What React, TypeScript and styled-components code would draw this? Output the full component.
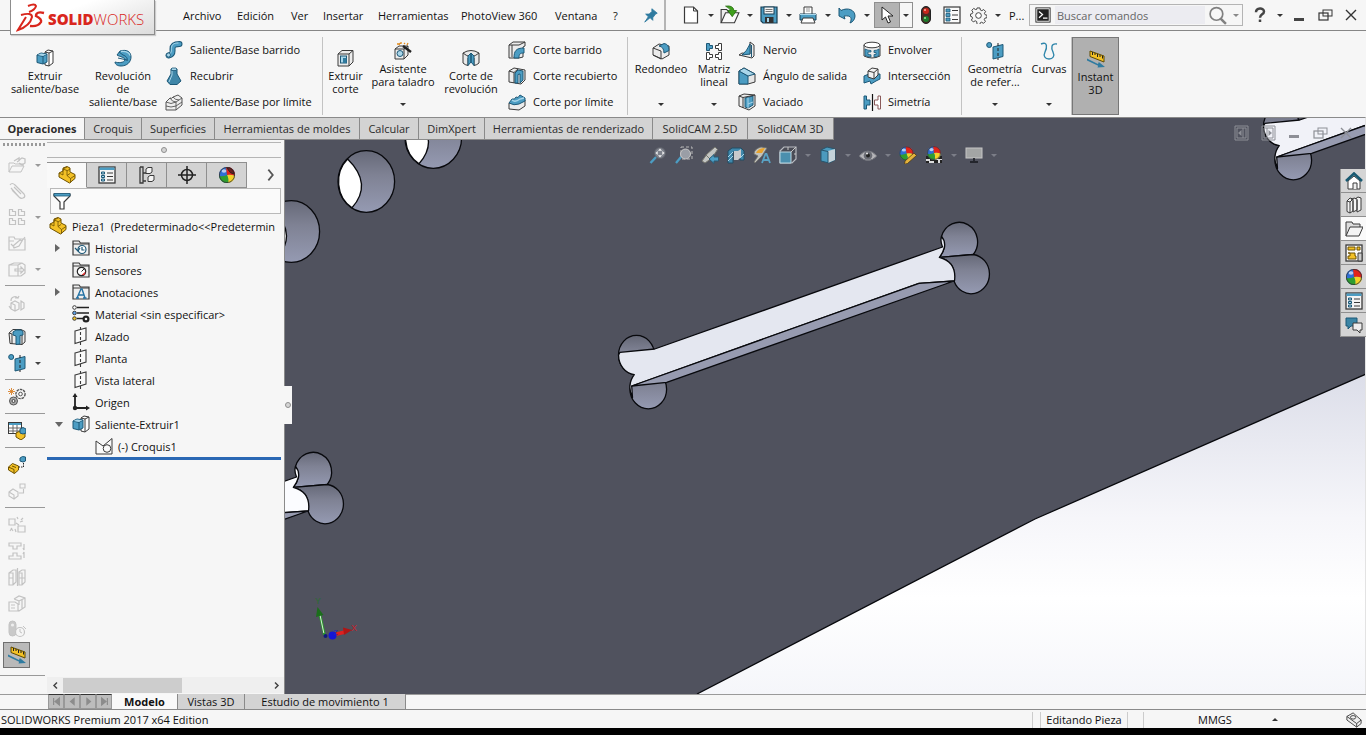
import React from "react";
import styled, { createGlobalStyle, css } from "styled-components";

const OUT = "#3a3a3a";
const BLUE = "#4c9dc3";
const LIGHT = "#a9d6ea";
const DEEP = "#1d5877";
const GOLD = "#f3c126";

const GlobalStyle = createGlobalStyle`
  * { box-sizing: border-box; }
  body {
    margin: 0;
    background: #000;
    color: #111;
    font-family: "Open Sans", "Noto Sans", sans-serif;
    font-size: 11px;
    line-height: 13px;
  }
  button, input { font: inherit; color: inherit; margin: 0; padding: 0; border: 0; background: none; }
  svg { display: block; flex: none; }
`;

/* ---------- icons ---------- */

const Ball = ({ x = 9, y = 9, r = 8 }: { x?: number; y?: number; r?: number }) => (
  <g transform={`translate(${x} ${y}) scale(${r / 8})`}>
    <circle r="8" fill="#2f6fd6" />
    <path d="M0 0L-1 -8A8 8 0 0 1 8 1Q4 -1 0 0Z" fill="#e2231a" />
    <path d="M0 0Q4 -1 8 1A8 8 0 0 1 1 8Q2 4 0 0Z" fill="#f5d327" />
    <path d="M0 0Q2 4 1 8A8 8 0 0 1 -8 1Q-4 2 0 0Z" fill="#2f9e2f" />
    <ellipse cx="-3" cy="-4" rx="2.4" ry="1.8" fill="#fff" opacity=".65" />
    <circle r="7.6" fill="none" stroke="#333" strokeWidth=".8" />
  </g>
);

const FolderShape = () => (
  <>
    <path d="M1 16V2h6l1.5 2H17v12z" fill="#eee" stroke={OUT} strokeWidth="1.2" />
    <path d="M1 5h16" stroke={OUT} />
  </>
);

const PlaneShape = () => (
  <>
    <path d="M3 4l11-3v12L3 16.5z" fill="#fafafa" stroke={OUT} strokeWidth="1.1" />
    <path d="M8.5 0v18" stroke={OUT} strokeDasharray="3 2" strokeWidth="1.1" />
  </>
);

const RefPlane = () => (
  <>
    <path d="M7 5l10-2.500v12L7 17z" fill={BLUE} stroke={DEEP} />
    <path d="M12 1v17" stroke="#222" strokeDasharray="3 2" />
    <circle cx="3.200" cy="3" r="2.500" fill={BLUE} stroke={DEEP} />
  </>
);

const PartShape = () => (
  <>
    <path d="M1 7l4-2 0-3 4-1.500 3 1.500v4l5 2.500v4L11.500 17 1 11z" fill={GOLD} stroke="#6f5200" />
    <path d="M1 7l4 2V3l4 1.500v5l3.500 3V17M5 3l4-2M9 5l3-2M9 9.500l3-2M12.500 12.500l4.500-3" fill="none" stroke="#6f5200" strokeWidth=".8" />
  </>
);

const ListShape = () => (
  <>
    <rect x="1" y="1" width="16" height="16" fill="#f4f4f4" stroke={OUT} strokeWidth="1.300" />
    <rect x="1.500" y="1.500" width="15" height="2.500" fill={BLUE} />
    <path d="M3.500 6h3v2h-3zM3.500 9.500h3v2h-3zM3.500 13h3v2h-3z" fill={LIGHT} stroke={DEEP} />
    <path d="M9 7h6M9 10.500h6M9 14h6" stroke={OUT} strokeWidth="1.200" />
  </>
);

const ExtrudeShape = () => (
  <>
    <path d="M9 3l3-2 5 1v12l-4 3-4-1z" fill="#fff" stroke={OUT} />
    <path d="M17 2l-4 2v13M13 4L9 3" fill="none" stroke={OUT} />
    <path d="M1 6l4-2 6 1v8l-4 2-6-1.500z" fill={BLUE} stroke={DEEP} />
    <path d="M1 6l6 1.500V15M7 7.500L11 5" fill="none" stroke={DEEP} />
    <path d="M1.500 6L5 4.400 10.500 5.200 7 7z" fill={LIGHT} />
  </>
);

const MeasureShape = () => (
  <>
    <path d="M3 1l14 5v6L3 6.500z" fill={GOLD} stroke="#5f4a00" />
    <path d="M5.500 2v3M8 3v2M10.500 4v3M13 5v2M15.500 6v2.500" stroke="#222" />
    <path d="M0 8.500l11 5.500.8-2L18 17l-7.500.5.6-1.800L0 10.500z" fill="#2f7ba0" />
  </>
);

const CubeHole = ({ children }: { children?: React.ReactNode }) => (
  <>
    <path d="M1 5l4-3.500h11V13l-4 4H1z" fill="#ececec" stroke={OUT} />
    <path d="M1 5h11v12M12 5l4-3.500" fill="none" stroke={OUT} />
    {children}
  </>
);

const Lens = () => (
  <>
    <path d="M8 10L1.500 17" stroke={BLUE} strokeWidth="2.400" />
    <circle cx="11" cy="7" r="5.500" fill="#7d818b" stroke="#5d6069" />
  </>
);

const ICONS: Record<string, React.ReactNode> = {
  extrude: <ExtrudeShape />,
  revolve: (
    <>
      <path d="M6 2c7-2 11 1 11 6s-4 9-10 9c-4 0-6-2-6-4 3 1 9 1 10-2 0-3-5-3-8-5z" fill={BLUE} stroke={DEEP} />
      <path d="M5 3l4 3c3 1 5 3 4 6M4 9l9 2" fill="none" stroke={DEEP} />
      <path d="M7 2.500c5-.5 8 1 9 4" fill="none" stroke={LIGHT} strokeWidth="1.300" />
    </>
  ),
  sweep: (
    <>
      <path d="M3.500 14.500c5-1 4-4 4-6.500 0-4 2-5 7-5" fill="none" stroke={DEEP} strokeWidth="6" strokeLinecap="round" />
      <path d="M3.500 14.500c5-1 4-4 4-6.500 0-4 2-5 7-5" fill="none" stroke={BLUE} strokeWidth="4" strokeLinecap="round" />
      <path d="M3.500 13.500c3-1 3-4 3-6 0-4 2-5.500 7-5.500" fill="none" stroke={LIGHT} />
      <circle cx="3.500" cy="14" r="2" fill={LIGHT} stroke={DEEP} strokeWidth=".8" />
    </>
  ),
  loft: (
    <>
      <path d="M6 2h6v5l4 7-4 3.500H5L2 14l4-7z" fill="#3f86a8" stroke={DEEP} />
      <path d="M6 2l1 1.500h4L12 2l-1-1H7z" fill={LIGHT} stroke={DEEP} strokeWidth=".8" />
      <path d="M7 4v4l-3 7" stroke={LIGHT} fill="none" />
    </>
  ),
  boundary: (
    <>
      <path d="M1 9l4-4q2 1 3-1l5-2 4 3v7l-6 5H1z" fill="#eee" stroke="#555" />
      <path d="M1 9q5 3 10 0l6-4M11 9v8M5 5q2 4 6 4M8 4q2 3 6 3M1 13q5 2 10 0l6-4" fill="none" stroke="#555" strokeWidth=".9" />
    </>
  ),
  cutExtrude: (
    <CubeHole>
      <rect x="3.500" y="7" width="6" height="7" fill={LIGHT} stroke={DEEP} />
      <path d="M6 14V9h3.500v5z" fill="#2f7ba0" />
    </CubeHole>
  ),
  holeWizard: (
    <>
      <path d="M1 7l4-3h9v9l-4 4H1z" fill="#ececec" stroke={OUT} />
      <path d="M1 7h9v10M10 7l4-3" fill="none" stroke={OUT} />
      <circle cx="6" cy="11.500" r="3" fill={LIGHT} stroke={DEEP} />
      <path d="M9 4l8 6" stroke="#222" strokeWidth="2.400" />
      <path d="M3 2h2M7 0v2M10 1l1 1M14 1l-1 2M5 3l1-2" stroke="#e08a1e" strokeWidth="1.300" />
    </>
  ),
  cutRevolve: (
    <>
      <path d="M1 4q8-5 16 0v10q-2 2-5 2.500V9L9 6 6 9v7.500Q3 16 1 14z" fill="#e9e9e9" stroke={OUT} />
      <path d="M6 16.500V7L9 4v9zM12 16.500V7L9 4v9z" fill={BLUE} stroke={DEEP} />
      <path d="M1 4q4 3 5 3M17 4q-4 3-5 3" fill="none" stroke={OUT} />
    </>
  ),
  cutSweep: (
    <>
      <path d="M1 4l4-3h12v4l-2 1v10l-4 1H1z" fill="#ececec" stroke={OUT} />
      <path d="M6 17c0-7 2-10 10-10v5c-4 0-5 1-5 5z" fill={BLUE} stroke={DEEP} />
      <path d="M1 4h10l6-3M4 4v12" fill="none" stroke={OUT} />
    </>
  ),
  cutLoft: (
    <>
      <path d="M1 4l5-3 11 2v10l-4 4-12-2z" fill="#ececec" stroke={OUT} />
      <path d="M1 4l5 1.500V16M6 5.500L10 2" fill="none" stroke={OUT} />
      <path d="M7 16V6l3-3 5 1v9l-3 3V7l-2 .5V16z" fill={BLUE} stroke={DEEP} />
    </>
  ),
  cutBoundary: (
    <>
      <path d="M1 10l16-3v6l-6 4-10-1z" fill="#ececec" stroke={OUT} />
      <path d="M1 10l3-4q3 1 4-2 2 2 4-2l5 3v3l-6 3q-5 2-10-1z" fill={BLUE} stroke={DEEP} />
      <path d="M4 7q3 3 8-1l4-1" fill="none" stroke={LIGHT} strokeWidth="1.300" />
    </>
  ),
  fillet: (
    <>
      <path d="M1 6l6-4 10 2v9l-7 4-9-4z" fill="#ececec" stroke={OUT} />
      <path d="M1 6l8 3v8M1 13l8 4" fill="none" stroke={OUT} />
      <path d="M7 4l5-2.500q5 .5 5 7l-5 2.500q0-6-5-7z" fill={BLUE} stroke={DEEP} />
    </>
  ),
  pattern: (
    <>
      <path d="M1.500 1.500h3v2h3v3h-3v2h-3z" fill={BLUE} stroke={DEEP} />
      <path d="M16.500 1.500h-3v2h-3v3h3v2h3zM1.500 10.500h3v2h3v3h-3v2h-3zM16.500 10.500h-3v2h-3v3h3v2h3z" fill="#fff" stroke={OUT} />
    </>
  ),
  rib: (
    <>
      <path d="M12 1l4 3v11l-2 2-13-3 3-2 8 1z" fill="#ececec" stroke={OUT} />
      <path d="M12 3v10l-8 1Q9 10 12 3z" fill={BLUE} stroke={DEEP} />
      <path d="M13.500 4v12" stroke={DEEP} />
    </>
  ),
  draft: (
    <>
      <path d="M1 4l5-3 11 6v8l-7 2H1z" fill="#e6e6e6" stroke={OUT} />
      <path d="M1 4l9 5v8H1z" fill={BLUE} stroke={DEEP} />
      <path d="M1 4l5-3 11 6-7 2z" fill={LIGHT} stroke={DEEP} />
    </>
  ),
  shell: (
    <>
      <path d="M1 3l5-2 11 1v11l-6 4-10-4z" fill="#ececec" stroke={OUT} />
      <path d="M7 5l8-2v9l-5 3-3-1z" fill={BLUE} stroke={DEEP} />
      <path d="M10 4.500V15M10 11l5-2" fill="none" stroke={LIGHT} />
      <path d="M1 3l4 1.500V15M5 4.500L17 2" fill="none" stroke={OUT} />
    </>
  ),
  wrap: (
    <>
      <path d="M1 4v11q8 4 16 0V4" fill="#ececec" stroke={OUT} />
      <ellipse cx="9" cy="4" rx="8" ry="2.800" fill="#fff" stroke={OUT} />
      <path d="M2 8q3 1.500 6 1.500V11H5v2.500l3 .3V16q-3 0-6-1.500zM16 8q-2 1.500-5 1.500v2h2v2h-2V16q3 0 5-1.500z" fill={BLUE} stroke={DEEP} strokeWidth=".8" />
    </>
  ),
  intersect: (
    <>
      <path d="M1 9l5-2h11v5l-4 2-5 3-1-3-6 2z" fill={BLUE} stroke={DEEP} />
      <path d="M5 4l4-3 6 1v6l-4 4-6-2z" fill="#f2f2f2" stroke={OUT} />
      <path d="M5 4l6 1.500V12M11 5.500L15 2" fill="none" stroke={OUT} />
    </>
  ),
  mirror: (
    <>
      <path d="M1 3h2.500v4H7v5H3.500v4H1z" fill={BLUE} stroke={DEEP} />
      <path d="M17.500 3H15v4h-3.500v5H15v4h2.500z" fill="#fff" stroke="#8a5a5a" />
      <path d="M9.500 1v17" stroke="#111" strokeWidth="1.200" />
    </>
  ),
  refGeometry: <RefPlane />,
  curves: (
    <path d="M1 2c7-3 6 4 4 8s0 7 4 7 6-3 4-7-2-9 4-8" fill="none" stroke="#2f86ab" strokeWidth="1.400" />
  ),
  measure: <MeasureShape />,
  pin: <path d="M10 2l6 5-2 1-3 4v3l-3-3-6 5 4-6-3-3h4l3-3z" fill="#2f7ba0" stroke="#2f7ba0" />,
  newDoc: (
    <>
      <path d="M2.500 1h9l4 4v12h-13z" fill="#fff" stroke={OUT} strokeWidth="1.200" />
      <path d="M11.500 1v4h4" stroke={OUT} />
    </>
  ),
  open: (
    <>
      <path d="M1 16V4h5l1.500 2H13v3" fill="#ededed" stroke={OUT} />
      <path d="M1 16l4-9h12l-4 9z" fill="#fafafa" stroke={OUT} />
      <path d="M5 1q7-1 7.500 4H15l-4 5.500L7 5h2.500Q9 3 5 1z" fill="#3fa01c" stroke="#226b0a" strokeWidth=".7" />
    </>
  ),
  save: (
    <>
      <path d="M1 1h16v16H3l-2-2z" fill={BLUE} stroke="#163e54" strokeWidth="1.200" />
      <rect x="4" y="1" width="10" height="7" fill="#f5f5f5" stroke="#163e54" />
      <path d="M5.500 3.500h7M5.500 5.500h7" stroke="#777" />
      <rect x="5" y="11" width="8.500" height="6" fill="#333" />
      <rect x="7" y="12" width="2" height="4" fill={LIGHT} />
    </>
  ),
  print: (
    <>
      <path d="M5 8V1h8v7" fill="#fff" stroke={OUT} />
      <path d="M7 3h4M7 5h4" stroke="#999" />
      <path d="M1 8h16v6H1z" fill={BLUE} stroke="#163e54" />
      <path d="M4 12h10l2 5H2z" fill="#fff" stroke={OUT} />
      <path d="M1 8.500h16" stroke={LIGHT} />
    </>
  ),
  undo: (
    <path d="M1 2l2 2.500C10 1 17 4 17 10c0 3-2 6-5 7 2-4 2-8-6-7l1 3-6-3z" fill={BLUE} stroke={DEEP} />
  ),
  cursor: <path d="M4 1v13l3.500-3 2.500 6 2.500-1-2.500-6H15z" fill="#fff" stroke="#222" />,
  traffic: (
    <>
      <rect x="4.500" y="0.500" width="9" height="17" rx="4.500" fill="#4a2b25" stroke="#222" />
      <circle cx="9" cy="5" r="3" fill="#c8261c" />
      <circle cx="9" cy="13" r="3" fill="#1c7a2a" />
      <circle cx="8" cy="4" r="1" fill="#ffb0a0" />
      <circle cx="8" cy="12" r="1" fill="#a0e8a0" />
    </>
  ),
  options: (
    <>
      <rect x="1" y="1" width="16" height="16" fill="#fafafa" stroke={OUT} strokeWidth="1.200" />
      <path d="M3 3h4v3H3zM3 7.500h4v3H3zM3 12h4v3H3z" fill={BLUE} stroke={DEEP} strokeWidth=".8" />
      <path d="M9 4.500h6M9 9h6M9 13.500h6" stroke={OUT} strokeWidth="1.200" />
    </>
  ),
  gear: (
    <>
      <path
        d="M7.500 1h3l.5 2.200 1.500.7 2-1.200 2 2-1.200 2 .7 1.500 2.000.5v2.600l-2.200.5-.7 1.500 1.200 2-2 2-2-1.200-1.500.7-.5 2.200h-2.600L7 15.300l-1.500-.7-2 1.200-2-2 1.200-2-.7-1.500L.5 9.800V7.500L2.400 7l.7-1.500-1.200-2 2-2 2 1.200L7 2.600z"
        fill="#f6f6f6"
        stroke={OUT}
      />
      <circle cx="9" cy="9" r="3" fill="#fff" stroke={OUT} />
    </>
  ),
  terminal: (
    <>
      <rect x="1" y="1" width="16" height="16" fill="#fff" stroke="#222" />
      <rect x="2.500" y="2.500" width="13" height="13" fill="#222" />
      <path d="M4.500 5l4 3.500-4 3.500M9 12.500h5" fill="none" stroke="#fff" strokeWidth="1.400" />
    </>
  ),
  search: (
    <>
      <circle cx="8" cy="7.500" r="6" fill="none" stroke="#808080" strokeWidth="1.600" />
      <path d="M12 12l5 5" stroke="#808080" strokeWidth="2.400" />
    </>
  ),
  help: (
    <path d="M4.500 6c0-5.500 9-5.500 9-1 0 3.500-4.500 3-4.500 7M9 14v3" fill="none" stroke="#444" strokeWidth="2.800" />
  ),
  minimize: <path d="M4 13.500h10" stroke="#444" strokeWidth="3" />,
  restore: (
    <>
      <rect x="7" y="4" width="9" height="6" fill="none" stroke="currentColor" />
      <rect x="3" y="7" width="9" height="7" fill="none" stroke="currentColor" strokeWidth="1.200" />
    </>
  ),
  close: <path d="M4 4l10 10M14 4L4 14" stroke="currentColor" strokeWidth="1.400" />,
  panelLeft: (
    <>
      <path d="M2 2h13v14H2zM4 4h9v10H4zM10 4v10" fill="none" stroke="currentColor" />
      <path d="M8.500 6v6L5 9z" fill="currentColor" />
    </>
  ),
  panelRight: (
    <>
      <path d="M3 2h13v14H3zM5 4h9v10H5zM8 4v10" fill="none" stroke="currentColor" />
      <path d="M9.500 6v6L13 9z" fill="currentColor" />
    </>
  ),
  flatMin: <path d="M4 12.500h10" stroke="currentColor" strokeWidth="3" />,
  part: <PartShape />,
  list: <ListShape />,
  config: (
    <>
      <path d="M2 1v16h3v-2h3M2 1h3v6h4M5 7v8" fill="none" stroke={OUT} strokeWidth="1.300" />
      <path d="M8 3l2-1.500h4V6l-2 1.500H8zM10 11l2-1.500h4V14l-2 1.500h-4z" fill="#f4f4f4" stroke={OUT} />
    </>
  ),
  target: (
    <>
      <circle cx="9" cy="9" r="5.500" fill="none" stroke="#222" strokeWidth="1.500" />
      <path d="M9 0v18M0 9h18" stroke="#222" strokeWidth="1.500" />
    </>
  ),
  ball: <Ball />,
  ballDark: (
    <>
      <Ball />
      <path d="M9 2q6-1 7 6-4 0-7-6z" fill="#6b1f1f" stroke="#222" strokeWidth=".8" />
    </>
  ),
  funnel: (
    <>
      <path d="M1 2h16v2l-6 6v7H7v-7L1 4z" fill="#fff" stroke={OUT} strokeWidth="1.200" />
      <path d="M1 1.500h16v2.500H1z" fill={BLUE} stroke={DEEP} strokeWidth=".8" />
    </>
  ),
  history: (
    <>
      <FolderShape />
      <circle cx="10" cy="10.500" r="4" fill="#fff" stroke={DEEP} strokeWidth="1.200" />
      <path d="M10 8v3h2.500M3 9l3 3 2-3" fill="none" stroke={DEEP} strokeWidth="1.200" />
    </>
  ),
  sensors: (
    <>
      <FolderShape />
      <circle cx="9.500" cy="10.500" r="4.200" fill="#fff" stroke="#222" strokeWidth="1.200" />
      <path d="M9.500 10.500L12 8" stroke="#222" />
      <path d="M9.500 14l4-3.500-1 3.500z" fill="#d33" />
    </>
  ),
  annotations: (
    <>
      <FolderShape />
      <path d="M5 15l4-9h1l3 9M6.500 12h5M4 15h3M11 15h3.500" fill="none" stroke="#2472a4" strokeWidth="1.400" />
    </>
  ),
  material: (
    <>
      <path d="M5 2.500h12M5 8h12M5 13.500h6" stroke="#222" strokeWidth="1.600" />
      <circle cx="2.500" cy="2.500" r="1.800" fill="#fff" stroke={OUT} />
      <circle cx="2.500" cy="8" r="1.800" fill="#5da2ea" stroke={OUT} />
      <circle cx="2.500" cy="13.500" r="1.800" fill={GOLD} stroke={OUT} />
      <circle cx="14" cy="14" r="2.400" fill="none" stroke="#222" strokeWidth="2.200" />
    </>
  ),
  plane: <PlaneShape />,
  origin: (
    <>
      <path d="M3 3v12h11" fill="none" stroke="#222" strokeWidth="1.800" />
      <path d="M3 0l2.500 4h-5zM18 15l-4 2.500v-5z" fill="#222" />
      <circle cx="3" cy="15" r="2.200" fill="#222" />
    </>
  ),
  sketch: (
    <>
      <path d="M1 17V4l7 5 9-7.500V17z" fill="#fafafa" stroke={OUT} />
      <circle cx="12" cy="11.500" r="3.800" fill="#fafafa" stroke={OUT} />
    </>
  ),
  holeSeries: (
    <>
      <path d="M1 5l4-3.500h8l4 2V14l-3 2.500-12-1z" fill="#ececec" stroke={OUT} />
      <path d="M1 5l3 1v10M14 6v10.500" stroke={OUT} />
      <path d="M5 4l3-2h5l2 1.500V7l-3 .5V16l-4 .5V8L5 7z" fill={BLUE} stroke={DEEP} />
    </>
  ),
  assemblyOpen: (
    <>
      <path d="M1 16V7h5l1 1h8v2M1 16l3-6h12l-3 6z" fill="none" stroke="currentColor" />
      <path d="M6 5l5-3v2l3-2 3 1v4l-3 2-3-2M9 6l3-2" fill="none" stroke="currentColor" strokeWidth="1.300" />
    </>
  ),
  clip: <path d="M2 3q2-3 5 0l9 9q2 3-1 4-2 1-4-1L3 6M6 5l7 7M4 8l7 7" fill="none" stroke="currentColor" strokeWidth="1.200" />,
  patternGrey: (
    <path d="M1.500 1.500h3v2h3v4h-6zM10.500 1.500h3v2h3v4h-6zM1.500 10.500h3v2h3v4h-6zM10.500 10.500h3v2h3v4h-6z" fill="none" stroke="currentColor" strokeWidth="1.200" />
  ),
  folderEdit: (
    <path d="M1 16V3h5l1 2h10v11zM1 7h5M5 12l7-6 2 1-3 5-5 2zM3 10l4 4M17 3l-4 5" fill="none" stroke="currentColor" strokeWidth="1.200" />
  ),
  moveBox: (
    <path d="M1 5l5-2h8l3 2v8l-4 3H1zM1 5h9v11M10 5l4-2M7 9h6V7l3 3-3 3v-2H7z" fill="none" stroke="currentColor" strokeWidth="1.200" />
  ),
  rotate: (
    <path d="M3 7a4 4 0 0 1 7-3l1-2M10 4H7M3 9l4-2 4 2v6l-4 2-4-2zM3 9l4 2v6M13 7l3 2v5l-3 2zM1 12l2 3" fill="none" stroke="currentColor" strokeWidth="1.200" />
  ),
  gears: (
    <>
      <circle cx="12.500" cy="6" r="4.600" fill="#f3f3f3" stroke="#555" strokeWidth="1.400" strokeDasharray="2.600 .8" />
      <circle cx="12.500" cy="6" r="1.800" fill="#fff" stroke="#555" />
      <circle cx="5.500" cy="13" r="4" fill="#aaa" stroke="#555" />
      <circle cx="5.500" cy="13" r="1.500" fill="#eee" stroke="#444" />
      <path d="M3.500 0v7M0 3.500h7M1 1l5 5M6 1L1 6" stroke="#d9822b" strokeWidth=".9" />
    </>
  ),
  tablePart: (
    <>
      <rect x="0.500" y="0.500" width="13" height="11" fill="#fff" stroke={OUT} />
      <rect x="1" y="1" width="12" height="2" fill={BLUE} />
      <path d="M1 6h12M1 9h12M5 3v8M9 3v8" stroke="#666" />
      <path d="M8 11l4-2 5 2v4l-4 3-5-3z" fill={GOLD} stroke="#6f5200" />
      <path d="M12 7l3-1.500 3 1.500v4l-3 1-3-1z" fill={BLUE} stroke={DEEP} />
    </>
  ),
  explode: (
    <>
      <path d="M0.500 11l4-3.500 6 2.500v4l-4 3.500-6-3.500z" fill={GOLD} stroke="#6f5200" />
      <path d="M0.500 11l5.500 2.500v4M4 10l4 1.500" fill="none" stroke="#6f5200" />
      <path d="M12 2l2.500-1.500L17.500 1v4L15 6l-3-1z" fill={BLUE} stroke={DEEP} />
      <path d="M15.500 7v4H11" fill="none" stroke="#222" strokeDasharray="1.500 1" />
    </>
  ),
  explodeGrey: (
    <path d="M1 10l4-3 5 3v4l-4 3-5-3zM1 10l5 3v4M12 2h5v4h-5zM15.500 7v4H11" fill="none" stroke="currentColor" strokeWidth="1.100" />
  ),
  fixBoxes: (
    <path d="M1 3h6v6H1zM10 10h7v6h-7zM8 7l3 2M9 1l1 2M13 4l2-2M12 6l3-1M3 12l2 3M2 15l2-3M7 13l1 3" fill="none" stroke="currentColor" strokeWidth="1.200" />
  ),
  clamp: (
    <path d="M1 1h12v3H9v3H5V4H1zM1 17h12v-3H9v-3H5v3H1zM16 2v6l-1-2M16 16v-6l-1 2" fill="none" stroke="currentColor" strokeWidth="1.200" />
  ),
  halves: (
    <path d="M1 5l4-3h3v12l-3 3H1zM1 5h4v12M11 4l3-2h3v12l-3 3h-3zM11 5h3v12M9.500 0v18M1 10h4M11 10h6" fill="none" stroke="currentColor" strokeWidth="1.200" />
  ),
  boxSheet: (
    <path d="M6 5l5-3 6 2v9l-6 4-1-1M6 5l5 2v4M11 7l6-3M1 8h6l3 2v7H1zM3 11h4M3 14h4M14 6v9" fill="none" stroke="currentColor" strokeWidth="1.200" />
  ),
  lightClock: (
    <>
      <rect x="1" y="1" width="7" height="15" rx="3.500" fill="#c9c9c9" stroke="currentColor" />
      <circle cx="4.500" cy="5" r="1.600" fill="#eee" />
      <circle cx="12" cy="12" r="4.500" fill="#f6f6f6" stroke="currentColor" strokeWidth="1.200" />
      <path d="M12 9v3l2 1M15 6l3 3" fill="none" stroke="currentColor" />
    </>
  ),
  zoomFit: (
    <>
      <Lens />
      <path d="M11 2.500l2 2.200H9zM11 11.500l2-2.200H9zM6.500 7l2.200-2v4zM15.500 7l-2.200-2v4z" fill="#f0f0f0" />
    </>
  ),
  zoomArea: (
    <>
      <path d="M6 1h11v12H6z" fill="none" stroke="#b8b8b8" strokeDasharray="3 2" />
      <path d="M6 11L1 17" stroke={BLUE} strokeWidth="2.200" />
      <circle cx="10.500" cy="8" r="5" fill="#9a9ea6" stroke="#c8c8c8" />
    </>
  ),
  prevView: (
    <>
      <path d="M14 1l2.500 2.500L11 12l-7 5-3-2 5-7z" fill="#c3c5c3" stroke="#77776f" />
      <path d="M5 9l4 4" stroke="#77776f" />
      <path d="M17.500 11H13V8.500L8 13l5 4.500V15h4.500z" fill={BLUE} stroke="#2a5a74" />
    </>
  ),
  section: (
    <>
      <path d="M1 5l4-3h9l3 3v9h-4V6H6v11H1z" fill="#3f88ac" stroke="#234c62" />
      <path d="M7 5h4l3-2v8l-3 3H7z" fill="#c7c9cc" />
      <path d="M1 11l5-5M1 15l5-5M13 12l4-4" stroke={LIGHT} />
    </>
  ),
  annotView: (
    <>
      <path d="M1 8q0-5 7-7l6 1-5 8-7 7-1-1 4-6z" fill="#c2c2bc" stroke="#6d6d68" strokeWidth=".8" />
      <path d="M3 7q2-5 9-5l-3 5z" fill="#e8a32e" />
      <path d="M9 17l3.500-9h1L17 17M10.500 14h5" fill="none" stroke="#5aa2c4" strokeWidth="1.800" />
    </>
  ),
  viewCube: (
    <>
      <path d="M1 5l4-4h12v12l-4 4H1z" fill="#4a4c56" stroke="#b9bcc2" strokeWidth="1.200" />
      <path d="M1 6h11v11H1z" fill="#4b8fae" stroke="#b9d5e0" />
      <path d="M12 6l5-5M9 4V1M15 8h2" stroke="#c8c8c8" />
    </>
  ),
  shaded: (
    <>
      <path d="M2 4l6-3 8 2v11l-6 3-8-2z" fill="#4b9abe" stroke="#27546c" />
      <path d="M9 5l7-2v11l-7 3z" fill="#c5d3da" />
      <path d="M2 4l7 1.500V17" fill="none" stroke="#27546c" />
    </>
  ),
  eye: (
    <>
      <path d="M0 10Q9 0 18 10 9 19 0 10z" fill="#b4b4b8" stroke="#70727a" />
      <circle cx="9" cy="9.500" r="4.300" fill="#6a6c74" />
      <circle cx="9" cy="9.500" r="2" fill="#222" />
      <circle cx="8" cy="7.500" r="1" fill="#eee" />
    </>
  ),
  ballPencil: (
    <>
      <Ball x={7.5} y={7.5} r={7} />
      <path d="M6 15l9-8 2.500 2.500-9 8-3 .8z" fill="#e4b23c" stroke="#4a3a16" strokeWidth=".8" />
    </>
  ),
  ballFloor: (
    <>
      <path d="M1 10h16v7H1z" fill="#ddd" />
      <path d="M1 10h4v3H1zM9 14h4v3H9zM13 10h4v3h-4zM5 13h4v2H5zM1 15h3v2H1zM15 14h2v3h-2z" fill="#222" />
      <Ball x={9} y={7} r={6.8} />
    </>
  ),
  monitor: (
    <>
      <rect x="1" y="2" width="16" height="10" fill="#a3a5a5" stroke="#c6c6c6" />
      <path d="M9 12v3M5 16h8" stroke="#23252c" strokeWidth="1.800" />
    </>
  ),
  home: (
    <>
      <path d="M3 9v8h12V9L9 4z" fill="#fff" stroke={OUT} />
      <path d="M8 17v-6h4v6" fill="#eee" stroke={OUT} />
      <path d="M1 9l8-7.500L17 9" fill="none" stroke="#195a72" strokeWidth="2.600" />
    </>
  ),
  books: (
    <path d="M2 5l3-3 3 1v12l-3 2-3-1.500zM2 5l3 1v11M6 4l3-2 3 1v11l-4 2M8 4.500v11M10 3l3-2 3 1v12l-4 2M12 4v12M5 6l3-3" fill="#f4f4f4" stroke={OUT} />
  ),
  folderOpen: (
    <>
      <path d="M1 16V2h6l1 2h7v4" fill="#ddd" stroke={OUT} />
      <path d="M1 16l4-9h13l-4 9z" fill="#f4f4f4" stroke={OUT} />
    </>
  ),
  palette: (
    <>
      <rect x="1" y="1" width="16" height="16" fill="#fafafa" stroke={OUT} strokeWidth="1.300" />
      <path d="M3 3h7v3H3zM12 3h3v3h-3zM3 9h7v3h1v3H3v-3h2V9z" fill={GOLD} stroke="#6f5200" />
      <path d="M13 9h4v8h-4z" fill="#ccc" stroke={OUT} />
    </>
  ),
  chat: (
    <>
      <path d="M1 2h11v8H6l-3 3v-3H1z" fill="#3b85a5" stroke={DEEP} />
      <path d="M8 7h9v7h-2v3l-3-3H8z" fill="#eee" stroke={OUT} />
    </>
  ),
  tag: (
    <>
      <path d="M1 5l7-4 9 8v4l-5 4-11-8z" fill="#eee" stroke={OUT} />
      <path d="M1 5l11 8 5-4M12 13v4" fill="none" stroke={OUT} />
      <ellipse cx="8" cy="6" rx="3" ry="2" fill="none" stroke={OUT} />
    </>
  ),
  first: <path d="M5 4v10M13 4v10L7 9z" stroke="#8c8c8c" fill="#8c8c8c" strokeWidth="1.600" />,
  prev: <path d="M12 3v12L5 9z" fill="#8c8c8c" />,
  next: <path d="M6 3v12l7-6z" fill="#8c8c8c" />,
  last: <path d="M13 4v10M5 4v10l6-5z" stroke="#8c8c8c" fill="#8c8c8c" strokeWidth="1.600" />,
  chevLeft: <path d="M12 3L6 9l6 6" fill="none" stroke="#444" strokeWidth="3" />,
  chevRight: <path d="M6 3l6 6-6 6" fill="none" stroke="#444" strokeWidth="3" />,
  chevThin: <path d="M6 3l5 6-5 6" fill="none" stroke="#555" strokeWidth="2" />,
};

const Icon = ({ name, size = 18 }: { name: string; size?: number }) => (
  <svg width={size} height={size} viewBox="0 0 18 18" fill="none" aria-hidden="true">
    {ICONS[name]}
  </svg>
);

const Caret = styled.span<{ $tone?: string; $up?: boolean }>`
  width: 0;
  height: 0;
  border: 3px solid transparent;
  ${(p) =>
    p.$up
      ? css`border-bottom-color: ${p.$tone || "#333"}; border-top: 0;`
      : css`border-top-color: ${p.$tone || "#333"}; border-bottom: 0;`}
`;

/* ---------- title bar ---------- */

const Window = styled.div`
  display: flex;
  flex-direction: column;
  min-height: 100vh;
  background: #f6f6f6;
`;

const TitleBar = styled.header`
  position: relative;
  display: flex;
  align-items: center;
  height: 31px;
  border-bottom: 1px solid #868686;
`;

const LogoBox = styled.div`
  position: absolute;
  top: 0;
  left: 10px;
  z-index: 2;
  display: flex;
  align-items: center;
  width: 145px;
  height: 35px;
  padding-left: 5px;
  border: 1px solid #8d8d8d;
  border-top: 0;
  background: linear-gradient(160deg, #fff 35%, #dcdcdc);
  color: #d9261c;
  font-size: 15px;
  line-height: 20px;
  box-shadow: 1px 1px 1px #ccc;
`;

const LogoBold = styled.b`
  margin-left: 1px;
  padding-top: 4px;
  font-weight: 800;
`;

const LogoThin = styled.span`
  padding-top: 4px;
  font-weight: 300;
`;

const Menu = styled.nav`
  display: grid;
  grid-template-columns: 54px 54px 32px 55px 83px 94px 58px 25px;
  align-items: center;
  margin-left: 183px;
`;

const MenuItem = styled.button`
  text-align: left;
  white-space: nowrap;
`;

const IconButton = styled.button<{ $w?: number; $h?: number; $tone?: string }>`
  display: flex;
  align-items: center;
  justify-content: center;
  flex: none;
  width: ${(p) => p.$w || 26}px;
  height: ${(p) => p.$h || 26}px;
  color: ${(p) => p.$tone || "#333"};
`;

const TitleTools = styled.div`
  display: flex;
  align-items: center;
  height: 30px;
  margin-left: auto;
  padding: 0 3px 0 12px;
  border-left: 2px solid #b5b5b5;
`;

const SelectTool = styled.div`
  display: flex;
  margin-left: 1px;
  border: 1px solid #8f8f8f;
  height: 26px;
  ${IconButton} { height: 24px; }
  ${IconButton}:first-child { width: 25px; background: #b3b3b3; border-right: 1px solid #8f8f8f; }
`;

const DocName = styled.span`
  width: 25px;
  padding-left: 5px;
`;

const SearchBox = styled.label`
  display: flex;
  align-items: center;
  width: 214px;
  height: 22px;
  padding-left: 5px;
  border: 1px solid #b4b4b4;
  margin-right: 4px;
`;

const SearchInput = styled.input`
  flex: 1;
  min-width: 0;
  height: 18px;
  margin-left: 4px;
  padding-left: 2px;
  background: #ececf1;
  &::placeholder { color: #666; opacity: 1; }
`;

/* ---------- ribbon ---------- */

const Ribbon = styled.section`
  display: flex;
  height: 86px;
  padding: 6px 0 2px 5px;
`;

const Group = styled.div`
  display: flex;
  padding-right: 1px;
  border-right: 1px solid #c3c3c3;
`;

const BigButton = styled.button<{ $w: number; $menu?: boolean; $on?: boolean }>`
  display: flex;
  flex-direction: column;
  align-items: center;
  width: ${(p) => p.$w}px;
  height: 78px;
  padding-top: ${(p) => (p.$menu ? 5 : 12)}px;
  border: ${(p) => (p.$on ? "1px solid #777" : "0")};
  background: ${(p) => (p.$on ? "#b0b0b0" : "none")};
  span { white-space: pre-line; }
  i { margin: auto 0 9px; }
`;

const BigLabel = styled.span`
  margin-top: 2px;
  text-align: center;
`;

const Stack = styled.div<{ $w: number }>`
  display: grid;
  grid-template-rows: repeat(3, 26px);
  width: ${(p) => p.$w}px;
  padding-left: 4px;
`;

const SmallButton = styled.button`
  display: flex;
  align-items: center;
  gap: 7px;
  height: 25px;
  white-space: nowrap;
`;

/* ---------- stage ---------- */

const Stage = styled.main`
  position: relative;
  display: flex;
  flex: 1;
  flex-direction: column;
  background: #50525e;
  border-right: 1px solid #e3e3e3;
  border-top: 1px solid #8a8a8a;
`;

const Scene = styled.svg`
  position: absolute;
  inset: 0;
  width: 100%;
  height: 100%;
`;

const TabRow = styled.div`
  position: relative;
  display: flex;
  height: 22px;
`;

const CommandTab = styled.button<{ $w: number; $on?: boolean }>`
  width: ${(p) => p.$w}px;
  height: 22px;
  flex: none;
  border-right: 1px solid #8a8a8a;
  border-bottom: 1px solid ${(p) => (p.$on ? "#9a9a9a" : "#8a8a8a")};
  background: ${(p) => (p.$on ? "#f6f6f6" : "#d3d3d3")};
  color: #2b2b2b;
  font-weight: ${(p) => (p.$on ? 700 : 400)};
  white-space: nowrap;
`;

const DocControls = styled.div`
  display: flex;
  align-items: center;
  height: 18px;
  margin: 6px 6px 0 auto;
`;

const Work = styled.div`
  position: relative;
  display: flex;
  flex: 1;
`;

const Rail = styled.aside`
  display: flex;
  flex-direction: column;
  flex: none;
  width: 47px;
  background: #f6f6f6;
`;

const Grip = styled.div`
  height: 3px;
  margin: 3px 2px 6px 3px;
  background: repeating-linear-gradient(90deg, #9a9a9a 0 2px, #f6f6f6 2px 4px);
`;

const RailRow = styled.div<{ $off?: boolean; $on?: boolean }>`
  display: flex;
  align-items: center;
  height: 26px;
  padding-left: 3px;
  color: #c3c3c3;
  ${IconButton} { color: inherit; width: 27px; }
  ${(p) => p.$on && css`${IconButton} { background: #b9b9b9; border: 1px solid #6f6f6f; }`}
  ${Caret} { margin-left: 5px; border-top-color: ${(p) => (p.$off ? "#999" : "#444")}; }
`;

const RailRule = styled.hr`
  width: 40px;
  height: 1px;
  margin: 3px 0 4px 5px;
  border: 0;
  background: #999;
  &:last-child { width: 45px; margin: 7px 0 0; }
`;

const Panel = styled.section`
  display: flex;
  flex-direction: column;
  flex: none;
  width: 238px;
  padding: 2px 0 1px;
  background: #f6f6f6;
  border-right: 1px solid #8a8a8a;
`;

const PanelGrip = styled.div`
  display: flex;
  align-items: center;
  justify-content: center;
  height: 16px;
  margin-right: 3px;
  border-top: 1px solid #b5b5b5;
  border-bottom: 1px solid #b5b5b5;
`;

const Dot = styled.span`
  width: 6px;
  height: 6px;
  border: 1px solid #8f8f8f;
  border-radius: 50%;
  background: #d5d5d5;
`;

const PanelTabs = styled.div`
  display: flex;
  justify-content: space-between;
  height: 26px;
  margin-top: 4px;
`;

const TabSet = styled.div`
  display: flex;
`;

const PanelTab = styled.button<{ $on?: boolean }>`
  display: flex;
  align-items: center;
  justify-content: center;
  width: 40px;
  border: 1px solid #8f8f8f;
  border-width: 1px 1px 1px 0;
  background: #d3d3d3;
  ${(p) => p.$on && css`background: #f9f9f9; border-bottom-color: #f9f9f9;`}
`;

const FilterBox = styled.label`
  display: flex;
  align-items: center;
  height: 26px;
  margin: 0 3px 0 3px;
  padding-left: 2px;
  border: 1px solid #b9b9b9;
  background: #fafafa;
`;

const FilterInput = styled.input`
  flex: 1;
  min-width: 0;
`;

const Tree = styled.ul`
  margin: 1px 3px 0 0;
  padding: 0;
  list-style: none;
  border-bottom: 3px solid #2a68b4;
`;

const TreeRow = styled.li<{ $depth: number }>`
  display: flex;
  align-items: center;
  gap: 5px;
  height: 22px;
  padding-left: ${(p) => p.$depth}px;
  white-space: pre;
`;

const Twist = styled.span<{ $open?: boolean }>`
  width: 17px;
  margin-right: -5px;
  &::before {
    content: "";
    display: block;
    width: 0;
    height: 0;
    border: 4px solid transparent;
    ${(p) => (p.$open ? "border-top: 5px solid #666; border-bottom: 0;" : "border-left: 5px solid #666; border-right: 0;")}
  }
`;

const ScrollBar = styled.div`
  display: flex;
  align-items: center;
  height: 16px;
  margin-top: auto;
  background: #efefef;
`;

const Thumb = styled.div`
  width: 50%;
  height: 15px;
  background: #cdcdcd;
  margin-right: auto;
`;

const Flyout = styled.button`
  position: absolute;
  left: 284px;
  top: 246px;
  display: flex;
  align-items: center;
  justify-content: center;
  width: 8px;
  height: 38px;
  background: #f6f6f6;
`;

const View = styled.div`
  display: flex;
  flex: 1;
  align-items: flex-start;
`;

const HeadsUp = styled.div`
  display: flex;
  flex: 1;
  align-items: center;
  justify-content: center;
  height: 30px;
  padding-left: 20px;
`;

const TaskPane = styled.div`
  display: flex;
  flex-direction: column;
  width: 26px;
  margin: 29px -1px 0 0;
  border-left: 1px solid #999;
`;

const TaskTab = styled.button<{ $on?: boolean }>`
  display: flex;
  align-items: center;
  justify-content: center;
  height: 24px;
  border-bottom: 1px solid #8f8f8f;
  background: ${(p) => (p.$on ? "#fafafa" : "#d5d5d5")};
`;

/* ---------- bottom ---------- */

const ModelRow = styled.div`
  display: flex;
  height: 16px;
  padding-left: 48px;
  border-bottom: 1px solid #8a8a8a;
  box-shadow: inset 0 1px 0 #9a9a9a;
`;

const NavButton = styled.button`
  display: flex;
  align-items: center;
  justify-content: center;
  width: 16px;
  background: #bcbcbc;
  border: 1px solid #999;
  border-top-color: #333;
`;

const ModelTab = styled.button<{ $w: number; $on?: boolean }>`
  width: ${(p) => p.$w}px;
  border-right: 1px solid #8a8a8a;
  background: ${(p) => (p.$on ? "#f9f9f9" : "#d3d3d3")};
  font-weight: ${(p) => (p.$on ? 700 : 400)};
  white-space: nowrap;
`;

const StatusBar = styled.footer`
  display: flex;
  align-items: center;
  height: 18px;
  padding: 1px 3px 0 1px;
`;

const StatusName = styled.span`
  flex: 1;
`;

const StatusCell = styled.span<{ $w: number }>`
  display: flex;
  align-items: center;
  justify-content: center;
  width: ${(p) => p.$w}px;
  height: 16px;
  border-left: 1px solid #ccc;
  white-space: nowrap;
`;

const UnitsButton = styled.button`
  display: flex;
  align-items: center;
  gap: 40px;
  width: 201px;
  height: 16px;
  padding-left: 54px;
  border-left: 1px solid #ccc;
`;

const Desk = styled.div`
  height: 7px;
  background: #000;
`;

/* ---------- model drawing ---------- */

const Hole = ({ dx = 0, dy = 0 }: { dx?: number; dy?: number }) => (
  <g transform={`translate(${dx} ${dy})`} stroke="#08090d" strokeWidth="1.300">
    <ellipse cx="366.300" cy="181.500" rx="28.300" ry="30.800" fill="url(#bore)" />
    <path d="M347.600 159Q373 184 352 207.800A28.300 30.800 0 0 1 347.600 159Z" fill="#fff" />
  </g>
);

const Slot = ({ dx = 0, dy = 0, fill }: { dx?: number; dy?: number; fill: string }) => (
  <g transform={`translate(${dx} ${dy})`} stroke="#08090d" strokeWidth="1.300" strokeLinejoin="round">
    <ellipse cx="636.500" cy="355" rx="18" ry="19.600" fill="url(#boreDark)" />
    <ellipse cx="648.300" cy="389.200" rx="18.300" ry="19.600" fill="url(#bore)" />
    <path d="M939.300 257.300Q943 253 944.500 247L941.500 236.500A18.400 19.600 0 1 1 973.300 254.500Z" fill="url(#bore)" />
    <path d="M939.300 257.300L973.300 254.500A18.300 19.700 0 1 1 954 281Q957 262 939.300 257.300Z" fill="url(#bore)" />
    <path
      d="M654.700 349L942.500 247Q940 241 941.500 236.500Q945.500 241 944.500 247Q943 253 939.300 257.300Q957 262 954.500 281L919 283.300L631.700 386L632.500 397.500A18.300 19.600 0 0 1 634.300 374.700A18 19.600 0 0 1 618.600 355L620 352.300Z"
      fill={fill}
    />
    <path d="M631.700 386L919 283.300L954 281L666.700 382.300Z" fill="#979bb0" />
  </g>
);

const ModelScene = () => (
  <Scene viewBox="0 118 1365 576" preserveAspectRatio="xMinYMin slice" role="img" aria-label="Pieza 3D">
    <defs>
      <linearGradient id="bore" x1="0" y1="0" x2="0" y2="1">
        <stop offset="0" stopColor="#666978" />
        <stop offset=".4" stopColor="#7f8294" />
        <stop offset="1" stopColor="#959ab2" />
      </linearGradient>
      <linearGradient id="boreDark" x1="0" y1="0" x2="0" y2="1">
        <stop offset="0" stopColor="#646775" />
        <stop offset=".5" stopColor="#85889b" />
      </linearGradient>
      <linearGradient id="sky" x1="0" y1="0" x2="0" y2="1">
        <stop offset="0" stopColor="#dcdee9" />
        <stop offset=".45" stopColor="#f6f6fa" />
        <stop offset=".7" stopColor="#fff" />
        <stop offset="1" stopColor="#f5f6fa" />
      </linearGradient>
    </defs>
    <path d="M1366 374L1035 519L697 694H1366Z" fill="url(#sky)" />
    <path d="M1366 374L1035 519L697 694" fill="none" stroke="#08090d" strokeWidth="1.300" />
    <Hole />
    <Hole dx={67} dy={-44} />
    <Hole dx={-75} dy={50} />
    <Slot fill="#e4e7f0" />
    <Slot dx={-646} dy={230} fill="#fbfcff" />
    <Slot dx={645} dy={-229} fill="#f1f2f8" />
    <path d="M324.500 635L319.500 613" stroke="#2a9a2a" strokeWidth="2.600" />
    <path d="M323.800 633L320 615" stroke="#d4f0d4" />
    <path d="M317.500 607l6 8-7.500 2z" fill="#1b6e1b" />
    <path d="M333 635l12-3" stroke="#e02020" strokeWidth="3.400" />
    <path d="M343 627.500l9 2.500-8 5z" fill="#b01515" />
    <circle cx="325.500" cy="636" r="2" fill="#121a7a" />
    <circle cx="332.500" cy="635.500" r="4" fill="#1515d8" />
    <g fontFamily="Liberation Sans, sans-serif" fontSize="9">
      <text x="315" y="604" fill="#2c6b35">Y</text>
      <text x="351" y="631" fill="#c4222c">X</text>
      <text x="333" y="635" fill="#2222c0" fontSize="8">Z</text>
    </g>
  </Scene>
);

/* ---------- data ---------- */

const MENUS = ["Archivo", "Edición", "Ver", "Insertar", "Herramientas", "PhotoView 360", "Ventana", "?"];

const TABS: [string, number][] = [
  ["Operaciones", 85],
  ["Croquis", 57],
  ["Superficies", 73],
  ["Herramientas de moldes", 145],
  ["Calcular", 59],
  ["DimXpert", 66],
  ["Herramientas de renderizado", 168],
  ["SolidCAM 2.5D", 95],
  ["SolidCAM 3D", 86],
];

type RailItem = { icon: string; off?: boolean; menu?: boolean; on?: boolean } | null;
const RAIL: RailItem[] = [
  { icon: "assemblyOpen", off: true, menu: true },
  { icon: "clip", off: true },
  { icon: "patternGrey", off: true, menu: true },
  { icon: "folderEdit", off: true },
  { icon: "moveBox", off: true, menu: true },
  null,
  { icon: "rotate", off: true },
  null,
  { icon: "holeSeries", menu: true },
  { icon: "refGeometry", menu: true },
  null,
  { icon: "gears" },
  null,
  { icon: "tablePart" },
  null,
  { icon: "explode" },
  { icon: "explodeGrey", off: true },
  null,
  { icon: "fixBoxes", off: true },
  { icon: "clamp", off: true },
  { icon: "halves", off: true },
  { icon: "boxSheet", off: true },
  { icon: "lightClock", off: true },
  { icon: "measure", on: true },
  null,
];

const TREE: { icon: string; label: string; depth: number; twist?: "open" | "closed" }[] = [
  { icon: "part", label: "Pieza1  (Predeterminado<<Predetermin", depth: 2 },
  { icon: "history", label: "Historial", depth: 8, twist: "closed" },
  { icon: "sensors", label: "Sensores", depth: 25 },
  { icon: "annotations", label: "Anotaciones", depth: 8, twist: "closed" },
  { icon: "material", label: "Material <sin especificar>", depth: 25 },
  { icon: "plane", label: "Alzado", depth: 25 },
  { icon: "plane", label: "Planta", depth: 25 },
  { icon: "plane", label: "Vista lateral", depth: 25 },
  { icon: "origin", label: "Origen", depth: 25 },
  { icon: "extrude", label: "Saliente-Extruir1", depth: 8, twist: "open" },
  { icon: "sketch", label: "(-) Croquis1", depth: 48 },
];

const VIEW_TOOLS: [string, boolean][] = [
  ["zoomFit", false],
  ["zoomArea", false],
  ["prevView", false],
  ["section", false],
  ["annotView", false],
  ["viewCube", true],
  ["shaded", true],
  ["eye", true],
  ["ballPencil", false],
  ["ballFloor", true],
  ["monitor", true],
];

const TASKS = ["home", "books", "folderOpen", "palette", "ball", "list", "chat"];

const Big = ({ icon, label, w, menu, on }: { icon: string; label: string; w: number; menu?: boolean; on?: boolean }) => (
  <BigButton $w={w} $menu={menu} $on={on}>
    <Icon name={icon} />
    <BigLabel>{label}</BigLabel>
    {menu && <Caret as="i" />}
  </BigButton>
);

const SmallStack = ({ w, items }: { w: number; items: [string, string][] }) => (
  <Stack $w={w}>
    {items.map(([icon, label]) => (
      <SmallButton key={label}>
        <Icon name={icon} />
        {label}
      </SmallButton>
    ))}
  </Stack>
);

export default function App() {
  return (
    <>
      <GlobalStyle />
      <Window>
        <TitleBar>
          <LogoBox>
            <svg width="31" height="30" viewBox="0 0 31 30" fill="none" stroke="#d9261c" strokeWidth="2">
              <path d="M12 4Q19 1 20 4 19 8 13 10M5 13Q16 10 16 15 14 24 2 28L10 15" />
              <path d="M28 11Q20 9 20 14 26 17 25 20 22 25 14 24" strokeWidth="2.400" />
            </svg>
            <LogoBold>SOLID</LogoBold>
            <LogoThin>WORKS</LogoThin>
          </LogoBox>
          <Menu>
            {MENUS.map((m) => (
              <MenuItem key={m}>{m}</MenuItem>
            ))}
          </Menu>
          <IconButton aria-label="Fijar">
            <Icon name="pin" size={16} />
          </IconButton>
          <TitleTools>
            {["newDoc", "open", "save", "print", "undo"].map((n) => (
              <React.Fragment key={n}>
                <IconButton aria-label={n}><Icon name={n} size={n === "open" ? 20 : 18} /></IconButton>
                <IconButton $w={13} aria-label="Más"><Caret /></IconButton>
              </React.Fragment>
            ))}
            <SelectTool>
              <IconButton aria-label="Seleccionar"><Icon name="cursor" /></IconButton>
              <IconButton $w={12} aria-label="Más"><Caret /></IconButton>
            </SelectTool>
            <IconButton aria-label="Reconstruir"><Icon name="traffic" /></IconButton>
            <IconButton aria-label="Propiedades"><Icon name="options" /></IconButton>
            <IconButton aria-label="Opciones"><Icon name="gear" size={17} /></IconButton>
            <IconButton $w={13} aria-label="Más"><Caret /></IconButton>
            <DocName>P...</DocName>
            <SearchBox>
              <Icon name="terminal" size={16} />
              <SearchInput placeholder="Buscar comandos" aria-label="Buscar comandos" />
              <IconButton $w={24} $h={20} aria-label="Buscar"><Icon name="search" size={19} /></IconButton>
              <IconButton $w={13} $h={20} aria-label="Más"><Caret $tone="#888" /></IconButton>
            </SearchBox>
            <IconButton aria-label="Ayuda"><Icon name="help" size={16} /></IconButton>
            <IconButton $w={13} aria-label="Más"><Caret /></IconButton>
            <IconButton aria-label="Minimizar"><Icon name="minimize" /></IconButton>
            <IconButton aria-label="Restaurar"><Icon name="restore" /></IconButton>
            <IconButton aria-label="Cerrar"><Icon name="close" /></IconButton>
          </TitleTools>
        </TitleBar>

        <Ribbon>
          <Group>
            <Big icon="extrude" label={"Extruir\nsaliente/base"} w={80} />
            <Big icon="revolve" label={"Revolución\nde\nsaliente/base"} w={76} />
            <SmallStack w={160} items={[["sweep", "Saliente/Base barrido"], ["loft", "Recubrir"], ["boundary", "Saliente/Base por límite"]]} />
          </Group>
          <Group>
            <Big icon="cutExtrude" label={"Extruir\ncorte"} w={45} />
            <Big icon="holeWizard" label={"Asistente\npara taladro"} w={70} menu />
            <Big icon="cutRevolve" label={"Corte de\nrevolución"} w={66} />
            <SmallStack w={122} items={[["cutSweep", "Corte barrido"], ["cutLoft", "Corte recubierto"], ["cutBoundary", "Corte por límite"]]} />
          </Group>
          <Group>
            <Big icon="fillet" label="Redondeo" w={66} menu />
            <Big icon="pattern" label={"Matriz\nlineal"} w={40} menu />
            <SmallStack w={125} items={[["rib", "Nervio"], ["draft", "Ángulo de salida"], ["shell", "Vaciado"]]} />
            <SmallStack w={101} items={[["wrap", "Envolver"], ["intersect", "Intersección"], ["mirror", "Simetría"]]} />
          </Group>
          <Group>
            <Big icon="refGeometry" label={"Geometría\nde refer..."} w={66} menu />
            <Big icon="curves" label="Curvas" w={42} menu />
          </Group>
          <Big icon="measure" label={"Instant\n3D"} w={47} on />
        </Ribbon>

        <Stage>
          <ModelScene />
          <TabRow>
            {TABS.map(([label, w], i) => (
              <CommandTab key={label} $w={w} $on={i === 0}>{label}</CommandTab>
            ))}
            <DocControls>
              {["panelLeft", "panelRight", "flatMin", "restore", "close"].map((n) => (
                <IconButton key={n} $h={18} $tone="#8d8f96" aria-label={n}><Icon name={n} /></IconButton>
              ))}
            </DocControls>
          </TabRow>
          <Work>
            <Rail>
              <Grip />
              {RAIL.map((r, i) =>
                r ? (
                  <RailRow key={i} $off={r.off} $on={r.on}>
                    <IconButton aria-label={r.icon}><Icon name={r.icon} /></IconButton>
                    {r.menu && <Caret />}
                  </RailRow>
                ) : (
                  <RailRule key={i} />
                )
              )}
            </Rail>
            <Panel>
              <PanelGrip><Dot /></PanelGrip>
              <PanelTabs>
                <TabSet>
                  {["part", "list", "config", "target", "ballDark"].map((n, i) => (
                    <PanelTab key={n} $on={i === 0} aria-label={n}><Icon name={n} /></PanelTab>
                  ))}
                </TabSet>
                <IconButton aria-label="Más pestañas"><Icon name="chevThin" size={16} /></IconButton>
              </PanelTabs>
              <FilterBox>
                <Icon name="funnel" />
                <FilterInput aria-label="Filtro" />
              </FilterBox>
              <Tree>
                {TREE.map((t) => (
                  <TreeRow key={t.label} $depth={t.depth}>
                    {t.twist && <Twist $open={t.twist === "open"} />}
                    <Icon name={t.icon} />
                    {t.label}
                  </TreeRow>
                ))}
              </Tree>
              <ScrollBar>
                <IconButton $w={16} $h={16} aria-label="Izquierda"><Icon name="chevLeft" size={9} /></IconButton>
                <Thumb />
                <IconButton $w={16} $h={16} aria-label="Derecha"><Icon name="chevRight" size={9} /></IconButton>
              </ScrollBar>
            </Panel>
            <View>
              <HeadsUp>
                {VIEW_TOOLS.map(([n, menu]) => (
                  <React.Fragment key={n}>
                    <IconButton aria-label={n}><Icon name={n} /></IconButton>
                    {menu && <IconButton $w={14} aria-label="Más"><Caret $tone="#7c7e88" /></IconButton>}
                  </React.Fragment>
                ))}
              </HeadsUp>
              <TaskPane>
                {TASKS.map((n) => (
                  <TaskTab key={n} $on={n === "folderOpen"} aria-label={n}><Icon name={n} /></TaskTab>
                ))}
              </TaskPane>
            </View>
            <Flyout aria-label="Ocultar panel"><Dot /></Flyout>
          </Work>
        </Stage>

        <ModelRow>
          {["first", "prev", "next", "last"].map((n) => (
            <NavButton key={n} aria-label={n}><Icon name={n} size={13} /></NavButton>
          ))}
          <ModelTab $w={66} $on>Modelo</ModelTab>
          <ModelTab $w={67}>Vistas 3D</ModelTab>
          <ModelTab $w={161}>Estudio de movimiento 1</ModelTab>
        </ModelRow>
        <StatusBar>
          <StatusName>SOLIDWORKS Premium 2017 x64 Edition</StatusName>
          <StatusCell $w={8} />
          <StatusCell $w={87}>Editando Pieza</StatusCell>
          <StatusCell $w={16} />
          <UnitsButton>
            MMGS
            <Caret $up />
          </UnitsButton>
          <IconButton $w={19} $h={17} aria-label="Etiquetas"><Icon name="tag" size={16} /></IconButton>
        </StatusBar>
        <Desk />
      </Window>
    </>
  );
}
